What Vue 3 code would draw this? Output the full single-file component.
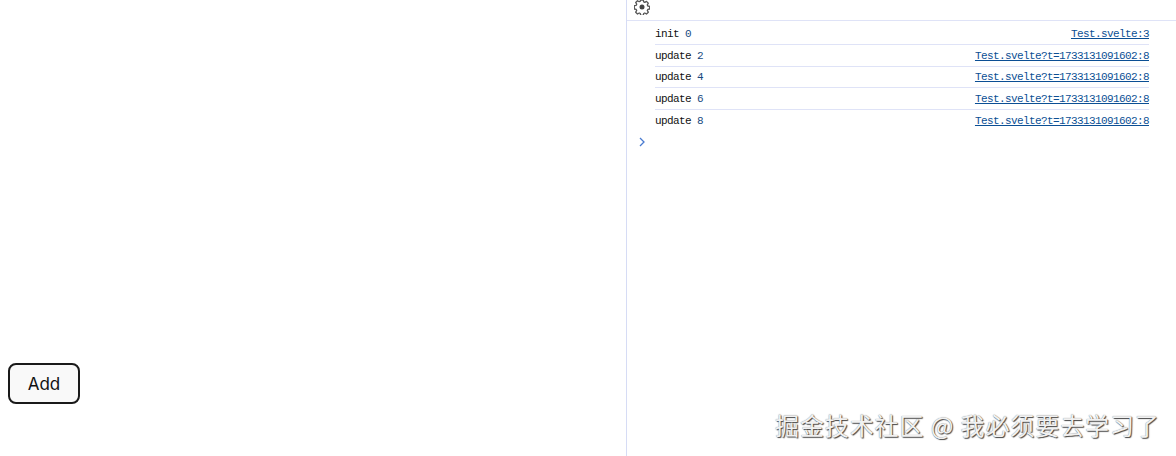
<script setup>
const rows = [
  { label: 'init', value: 0, source: 'Test.svelte:3' },
  { label: 'update', value: 2, source: 'Test.svelte?t=1733131091602:8' },
  { label: 'update', value: 4, source: 'Test.svelte?t=1733131091602:8' },
  { label: 'update', value: 6, source: 'Test.svelte?t=1733131091602:8' },
  { label: 'update', value: 8, source: 'Test.svelte?t=1733131091602:8' }
]
</script>

<template>
  <div class="page">
    <main class="preview">
      <button class="add" type="button">Add</button>
    </main>
    <aside class="console">
      <div class="toolbar">
        <svg class="gear" viewBox="0 0 16 16" width="16" height="16" aria-hidden="true">
          <path
            d="M6.7 1h2.6l.4 1.900 1.100.5 1.700-1 1.800 1.800-1 1.700.5 1.100 1.900.4v2.600l-1.900.4-.5 1.100 1 1.700-1.800 1.800-1.700-1-1.100.5-.4 1.900H6.700l-.4-1.900-1.100-.5-1.700 1-1.800-1.800 1-1.700-.5-1.100-1.900-.4V6.700l1.900-.4.5-1.100-1-1.700 1.800-1.800 1.700 1 1.100-.5z"
            fill="none"
            stroke="#555"
            stroke-width="1.300"
            stroke-linejoin="round"
          />
          <circle cx="8" cy="8" r="2.500" fill="#444" />
        </svg>
      </div>
      <div class="log">
        <div v-for="(row, i) in rows" :key="i" class="row">
          <span class="msg">{{ row.label }} <span class="num">{{ row.value }}</span></span>
          <a class="src">{{ row.source }}</a>
        </div>
      </div>
      <div class="prompt">
        <svg viewBox="0 0 6 10" width="6" height="10" aria-hidden="true">
          <path d="M1 1l4 4-4 4" fill="none" stroke="#4a7bd0" stroke-width="1.300" />
        </svg>
      </div>
      <div class="mark">掘金技术社区 @ 我必须要去学习了</div>
    </aside>
  </div>
</template>

<style>
html, body { margin: 0; background: #fff; overflow: hidden; }
</style>

<style scoped>
.page {
  display: flex;
  width: 1176px;
  height: 456px;
  overflow: hidden;
  background: #fff;
}
.preview {
  width: 626px;
  box-sizing: border-box;
  display: flex;
  flex-direction: column;
  justify-content: flex-end;
  align-items: flex-start;
  padding: 0 0 52px 8px;
}
.add {
  width: 72px;
  height: 41px;
  box-sizing: border-box;
  border: 2px solid #1a1a1a;
  border-radius: 8px;
  background: #f9f9f9;
  color: #111;
  font: 400 17px "Inter", "Liberation Sans", sans-serif;
  padding: 0;
}
.console {
  position: relative;
  flex: 1;
  border-left: 1px solid #d6dcf5;
  display: flex;
  flex-direction: column;
}
.toolbar {
  height: 20px;
  border-bottom: 1px solid #dfe3f7;
  padding-left: 7px;
  display: flex;
  align-items: flex-start;
}
.gear { margin-top: -1px; }
.log {
  padding: 2.5px 27px 0 28px;
  font: 11px/1 "Liberation Mono", monospace;
  letter-spacing: -0.6px;
}
.row {
  height: 21.6px;
  box-sizing: border-box;
  padding-top: 2px;
  display: flex;
  justify-content: space-between;
  align-items: center;
  border-bottom: 1px solid #dfe3f7;
  color: #111;
}
.row:last-child { border-bottom: 0; }
.num { color: #174a80; }
.src {
  color: #0b4f94;
  text-decoration: underline;
}
.prompt {
  padding: 5.5px 0 0 12px;
  line-height: 0;
}
.mark {
  position: absolute;
  left: 148px;
  top: 409px;
  font: 24px/32px "Noto Sans CJK SC", sans-serif;
  letter-spacing: 0.9px;
  white-space: nowrap;
  color: #f1f1f1;
  text-shadow: 1px 1px 1px #444, 0 0 1px #777;
}
</style>
